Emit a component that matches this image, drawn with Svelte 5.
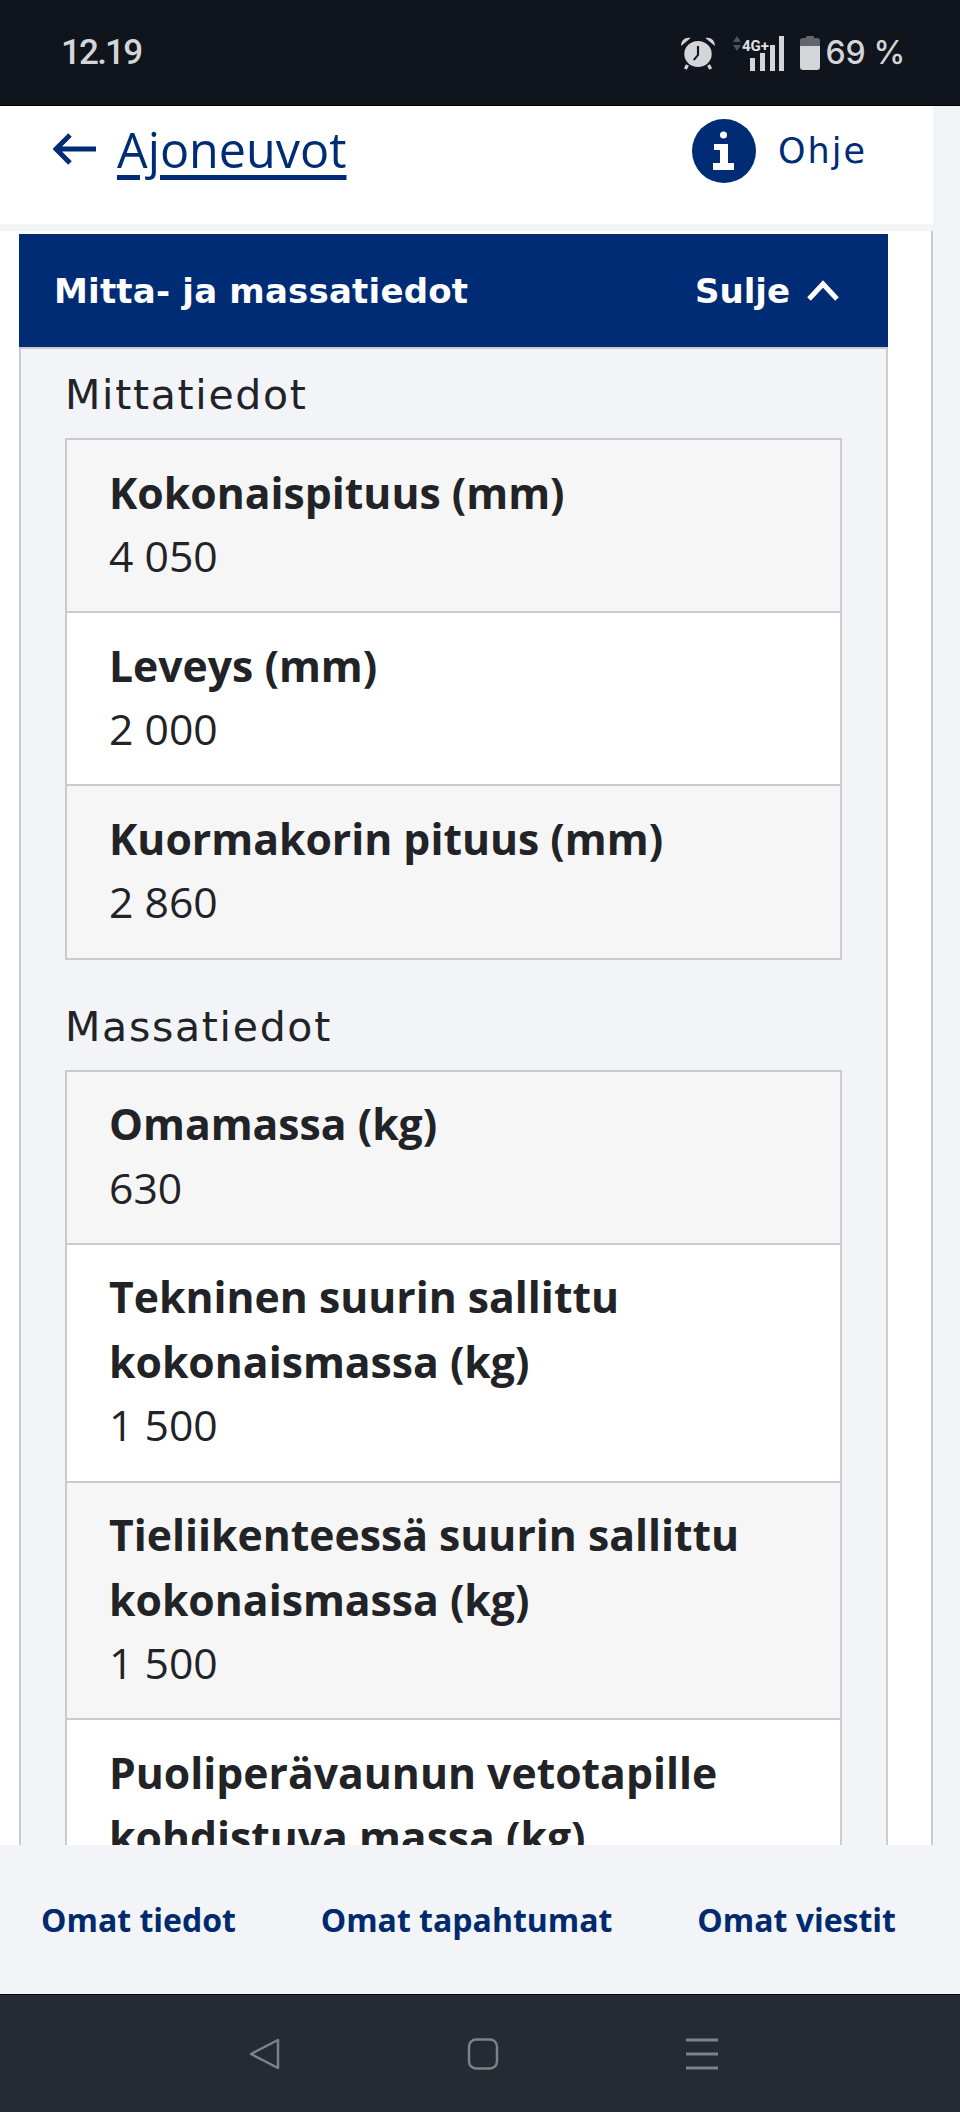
<script>
  const groups = [
    { title: 'Mittatiedot', rows: [
      { label: ['Kokonaispituus (mm)'], value: '4 050' },
      { label: ['Leveys (mm)'], value: '2 000' },
      { label: ['Kuormakorin pituus (mm)'], value: '2 860' }
    ]},
    { title: 'Massatiedot', rows: [
      { label: ['Omamassa (kg)'], value: '630' },
      { label: ['Tekninen suurin sallittu', 'kokonaismassa (kg)'], value: '1 500' },
      { label: ['Tieliikenteessä suurin sallittu', 'kokonaismassa (kg)'], value: '1 500' },
      { label: ['Puoliperävaunun vetotapille', 'kohdistuva massa (kg)'], value: '' }
    ]}
  ];
</script>

<div class="screen">
  <div class="status">
    <span class="time">12.19</span>
    <div class="sys">
      <svg class="alarm" width="38" height="36" viewBox="0 0 36 36" preserveAspectRatio="none">
        <circle cx="18" cy="19" r="13" fill="#d4d5d8"/>
        <path d="M2 11 C2 5 6 2 11 3 Z M34 11 C34 5 30 2 25 3 Z" fill="#d4d5d8"/>
        <path d="M18 11 V20 L14 25" fill="none" stroke="#10141d" stroke-width="2"/>
        <path d="M8 30 L6 34 M28 30 L30 34" stroke="#d4d5d8" stroke-width="3"/>
      </svg>
      <svg class="signal" width="56" height="36" viewBox="0 0 56 36">
        <path d="M4 7 L8 1 L12 7 Z M4 10 L8 16 L12 10 Z" fill="#4f5259"/>
        <text x="13" y="16" class="fourg">4G+</text>
        <rect x="21" y="23" width="5" height="13" fill="#d4d5d8"/>
        <rect x="31" y="18" width="5" height="18" fill="#d4d5d8"/>
        <rect x="41" y="10" width="5" height="26" fill="#d4d5d8"/>
        <rect x="50" y="1" width="5" height="35" fill="#d4d5d8"/>
      </svg>
      <svg class="batt" width="22" height="36" viewBox="0 0 22 36">
        <path d="M7 2 Q7 1 8 1 H14 Q15 1 15 2 V3 H18 Q21 3 21 6 V11 H1 V6 Q1 3 4 3 H7 Z" fill="#62656b"/>
        <path d="M1 11 H21 V32 Q21 35 18 35 H4 Q1 35 1 32 Z" fill="#d4d5d8"/>
      </svg>
      <span class="pct">69 %</span>
    </div>
  </div>

  <header class="top">
    <div class="back">
      <svg width="44" height="32" viewBox="0 0 44 32">
        <path d="M43 16 H3 M17 2 L3 16 L17 30" fill="none" stroke="#002c75" stroke-width="5"/>
      </svg>
      <a class="crumb" href="#top">Ajoneuvot</a>
    </div>
    <div class="help">
      <svg width="64" height="64" viewBox="0 0 64 64">
        <circle cx="32" cy="32" r="32" fill="#002c75"/>
        <circle cx="31.5" cy="16" r="3.5" fill="#fff"/>
        <path d="M22 25 H36 V44 H42 V51 H21 V44 H28 V31 H22 Z" fill="#fff"/>
      </svg>
      <span class="ohje">Ohje</span>
    </div>
  </header>
  <div class="stripe"></div>

  <main class="content">
    <div class="inner">
      <div class="bar">
        <span class="bar-title">Mitta- ja massatiedot</span>
        <span class="toggle">
          Sulje
          <svg width="34" height="22" viewBox="0 0 34 22">
            <path d="M3 19 L17 4 L31 19" fill="none" stroke="#fff" stroke-width="5"/>
          </svg>
        </span>
      </div>
      <div class="panel">
        {#each groups as g}
          <h3 class="group">{g.title}</h3>
          <div class="table">
            {#each g.rows as r}
              <div class="row">
                <div class="label">{#each r.label as line}<div>{line}</div>{/each}</div>
                {#if r.value}<div class="value">{r.value}</div>{/if}
              </div>
            {/each}
          </div>
        {/each}
      </div>
    </div>
  </main>

  <nav class="links">
    <a href="#a">Omat tiedot</a>
    <a href="#b">Omat tapahtumat</a>
    <a href="#c">Omat viestit</a>
  </nav>

  <div class="sysnav">
    <svg width="32" height="32" viewBox="0 0 32 32">
      <path d="M30 2 L3 16 L30 30 Z" fill="none" stroke="#7d8188" stroke-width="2.5" stroke-linejoin="round"/>
    </svg>
    <svg width="32" height="32" viewBox="0 0 32 32">
      <rect x="2" y="1.5" width="28" height="29" rx="7" fill="none" stroke="#7d8188" stroke-width="2.5"/>
    </svg>
    <svg width="32" height="32" viewBox="0 0 32 32">
      <path d="M0 2 H32 M0 16 H32 M0 30 H32" stroke="#7d8188" stroke-width="3"/>
    </svg>
  </div>
</div>

<style>
  :global(body) { margin: 0; background: #f2f4f8; }
  .screen {
    width: 960px; height: 2112px; display: flex; flex-direction: column;
    overflow: hidden; background: #f2f4f8; font-family: "Open Sans", sans-serif; color: #212326;
  }
  .status {
    height: 106px; flex: none; background: #10141d; display: flex; align-items: center;
    justify-content: space-between; padding: 0 55px 0 61px; box-sizing: border-box; color: #d4d5d8;
    border-bottom: 1px solid #000;
  }
  .time { font: 500 35px Roboto, sans-serif; letter-spacing: -1.8px; }
  .sys { display: flex; align-items: center; gap: 0; }
  .alarm { margin-right: 12px; }
  .signal { margin-right: 14px; }
  .batt { margin-right: 5px; }
  .fourg { font: 700 15px Roboto, sans-serif; fill: #e0e1e3; }
  .pct { font: 500 32px Inter, sans-serif; letter-spacing: -0.3px; }
  .top {
    flex: none; height: 118px; width: 933px; background: #fff; display: flex;
    justify-content: space-between; align-items: flex-start; box-sizing: border-box;
    padding: 13px 66px 0 53px;
  }
  .back { display: flex; align-items: center; gap: 20px; height: 60px; }
  .crumb {
    font: 400 48.5px "Open Sans", sans-serif; color: #002c75; text-decoration: underline;
    text-decoration-thickness: 5px; text-underline-offset: 7px;
  }
  .help { display: flex; align-items: center; gap: 22px; }
  .ohje { font: 400 35px "DejaVu Sans", sans-serif; color: #002c75; letter-spacing: 2px; }
  .stripe { flex: none; height: 7px; width: 933px; background: #f4f5f7; }
  .content { flex: 1; min-height: 0; overflow: hidden; }
  .inner {
    width: 933px; box-sizing: border-box; background: #fff; min-height: 100%;
    border-right: 2px solid #c9cbce; padding: 3px 43px 0 19px;
  }
  .bar {
    height: 113px; background: #002c75; color: #fff; display: flex; align-items: center;
    justify-content: space-between; padding: 0 48px 0 35px;
    box-sizing: border-box;
  }
  .bar-title, .toggle { font: 700 34px "DejaVu Sans", sans-serif; }
  .bar-title { letter-spacing: 0.2px; }
  .toggle { display: flex; align-items: center; gap: 16px; }
  .panel {
    background: #f2f4f8; border: solid #c9cbce; border-width: 2px; padding: 0 44px 40px;
  }
  .group {
    margin: 0; font: 400 41px/92px "DejaVu Sans", sans-serif; height: 89px; color: #212326;
    letter-spacing: 1.7px;
  }
  .table { border: 2px solid #c9cbce; border-bottom-width: 0; margin-bottom: 21px; }
  .row {
    padding: 20.5px 20px 22.5px 42px; background: #fff; border-bottom: 2px solid #c9cbce;
    font-size: 42.7px; line-height: 64.6px;
  }
  .row:nth-child(odd) { background: #f6f6f7; }
  .label { font-weight: 700; }
  .value { font-weight: 400; margin-top: -1px; }
  .links {
    flex: none; height: 149px; display: flex; align-items: center; justify-content: space-between;
    padding: 0 64px 0 41px; box-sizing: border-box; background: #f2f4f8;
  }
  .links a {
    font: 700 32px "Open Sans", sans-serif; color: #002a6e; text-decoration: none;
  }
  .sysnav {
    flex: none; height: 118px; background: #252a33; border-top: 1px solid #000; box-sizing: border-box;
    display: flex; align-items: center; justify-content: center; gap: 187px; padding-left: 6px;
  }
</style>
